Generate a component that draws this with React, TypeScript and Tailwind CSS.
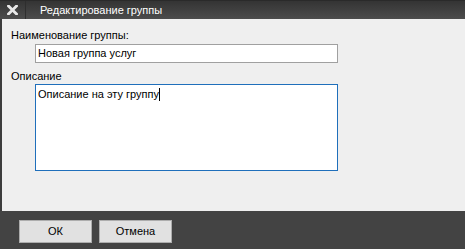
export default function App() {
  return (
    <div
      className="w-[465px] h-[249px] flex flex-col bg-[#efefef] overflow-hidden text-black"
      style={{ fontFamily: '"Liberation Sans", Arial, sans-serif' }}
    >
      {/* title bar */}
      <div className="h-[19px] flex items-stretch bg-gradient-to-b from-[#343434] to-[#4c4c4c] border-t border-[#2a2a2a]">
        <div className="w-[26px] flex items-center justify-center border-r border-[#2e2e2e]">
          <svg width="11" height="10" viewBox="0 0 11 10">
            <path d="M1.5 1 L9.5 9 M9.5 1 L1.5 9" stroke="#e8e8e8" strokeWidth="2.8" strokeLinecap="square" />
          </svg>
        </div>
        <div className="pl-[14px] flex items-center text-[11px] text-white">Редактирование группы</div>
      </div>

      {/* body */}
      <div className="flex-1 border-l-2 border-[#3c3c3c] pl-[9px] pt-[9px]">
        <div className="text-[11px] leading-[14px]">Наименование группы:</div>
        <div className="ml-[24px] mt-[2px] w-[303px] h-[19px] bg-white border border-[#a0a0a0] px-[2px] text-[11px] leading-[17px]">
          Новая группа услуг
        </div>
        <div className="mt-[6px] text-[11px] leading-[14px]">Описание</div>
        <div className="ml-[24px] mt-[1px] w-[303px] h-[87px] bg-white border border-[#1f6fbb] px-[2px] pt-[2px] text-[11px] leading-[14px]">
          Описание на эту группу
          <span className="inline-block w-[1px] h-[13px] bg-black align-[-3px]" />
        </div>
      </div>

      {/* footer */}
      <div className="h-[38px] bg-[#434343] flex items-start gap-[7px] pl-[19px] pt-[9px]">
        <button className="w-[73px] h-[23px] bg-[#e1e1e1] border border-[#adadad] text-[11px]">ОК</button>
        <button className="w-[73px] h-[23px] bg-[#e1e1e1] border border-[#adadad] text-[11px]">Отмена</button>
      </div>
    </div>
  );
}
